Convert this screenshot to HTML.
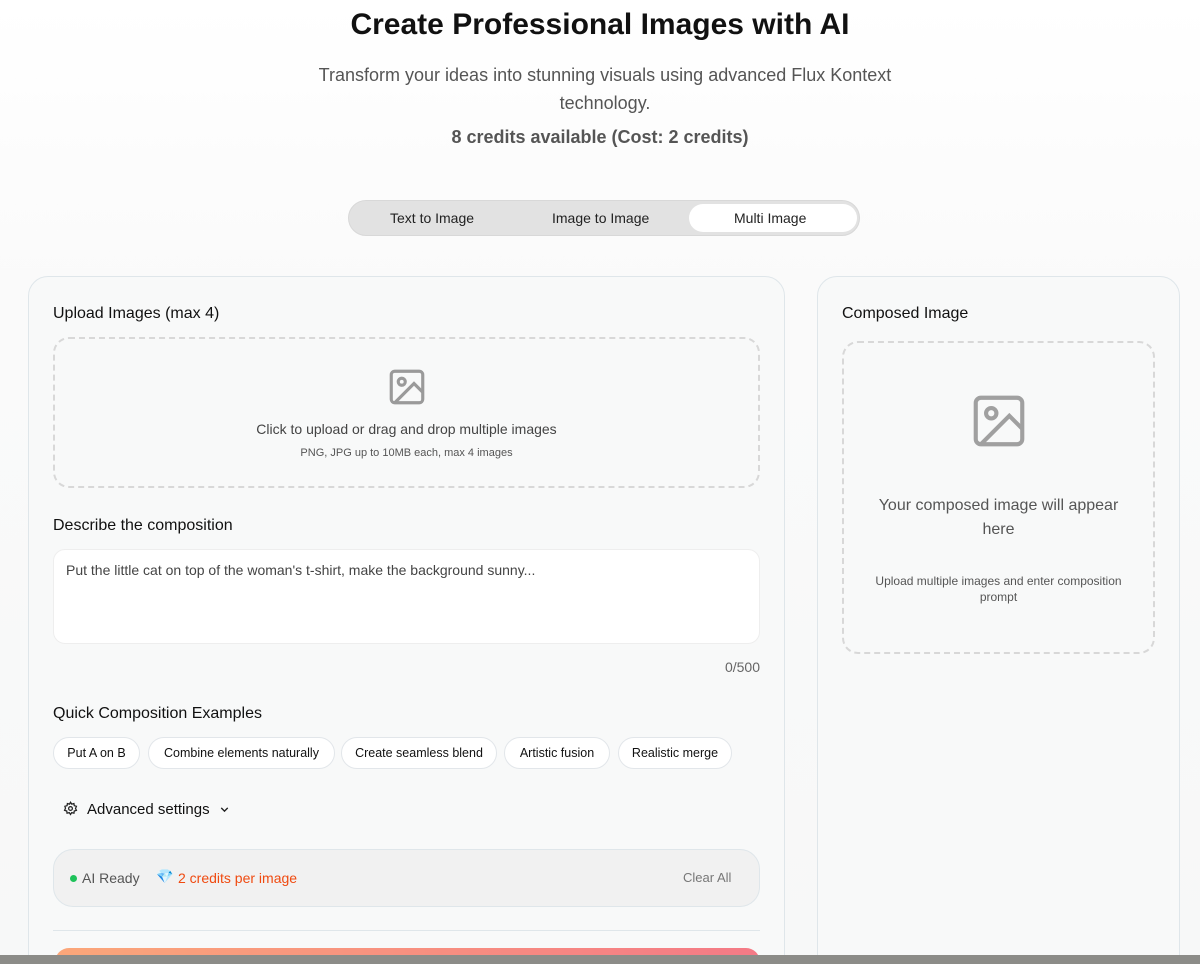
<!DOCTYPE html>
<html style="width:1200px;height:964px;overflow:hidden"><head><meta charset="utf-8"><style>
*{box-sizing:border-box;margin:0;padding:0}
body{width:1200px;height:964px;overflow:hidden;background:linear-gradient(#fff 0,#fafafa 300px,#f7f8f8 964px);font-family:"Liberation Sans",sans-serif;color:#111;position:relative}
h1{position:absolute;top:8px;width:100%;text-align:center;font-size:30px;font-weight:700;color:#111}
.sub{position:absolute;top:61px;left:290px;width:630px;text-align:center;font-size:18px;line-height:28px;color:#555}
.cred{position:absolute;top:127px;width:100%;text-align:center;font-size:18px;font-weight:700;color:#555}
.tabs{position:absolute;left:348px;top:200px;width:512px;height:36px;border-radius:18px;background:#e2e2e2;border:1px solid #d8d8d8}
.tabs span{position:absolute;top:9px;font-size:14px;color:#222}
.tabs .on{position:absolute;left:340px;top:3px;width:168px;height:28px;border-radius:14px;background:#fff}
.card{position:absolute;background:#f8f9f9;border:1px solid #dfe6ea;border-radius:20px}
.lbl{position:absolute;font-size:16px;color:#111}
.dash{position:absolute;border:2px dashed #d8d8d8;border-radius:16px}
.chip{position:absolute;top:737px;height:32px;border:1px solid #e2e6ea;border-radius:16px;background:#fff;font-size:12.5px;line-height:30px;text-align:center;color:#111;white-space:nowrap}
</style></head><body>
<h1>Create Professional Images with AI</h1>
<div class="sub">Transform your ideas into stunning visuals using advanced Flux Kontext technology.</div>
<div class="cred">8 credits available (Cost: 2 credits)</div>
<div class="tabs"><div class="on"></div><span style="left:41px">Text to Image</span><span style="left:203px">Image to Image</span><span style="left:385px">Multi Image</span></div>

<div class="card" style="left:28px;top:276px;width:757px;height:700px"></div>
<div class="lbl" style="left:53px;top:305px">Upload Images (max 4)</div>
<div class="dash" style="left:53px;top:337px;width:707px;height:151px"></div>
<svg style="position:absolute;left:386px;top:366px" width="42" height="42" viewBox="0 0 24 24" fill="none" stroke="#9a9a9a" stroke-width="1.8"><rect x="3" y="3" width="18" height="18" rx="2"/><circle cx="9" cy="9" r="2"/><path d="M21 15l-5-5L5 21"/></svg>
<div style="position:absolute;left:53px;width:707px;top:421px;text-align:center;font-size:14px;color:#444">Click to upload or drag and drop multiple images</div>
<div style="position:absolute;left:53px;width:707px;top:447px;text-align:center;font-size:11px;color:#555">PNG, JPG up to 10MB each, max 4 images</div>
<div class="lbl" style="left:53px;top:517px">Describe the composition</div>
<div style="position:absolute;left:53px;top:549px;width:707px;height:95px;background:#fff;border-radius:12px;border:1px solid #eee;padding:12px;font-size:14px;color:#444">Put the little cat on top of the woman's t-shirt, make the background sunny...</div>
<div style="position:absolute;left:700px;top:659px;width:60px;text-align:right;font-size:14px;color:#666">0/500</div>
<div class="lbl" style="left:53px;top:705px">Quick Composition Examples</div>
<div class="chip" style="left:53px;width:87px">Put A on B</div>
<div class="chip" style="left:148px;width:187px">Combine elements naturally</div>
<div class="chip" style="left:341px;width:156px">Create seamless blend</div>
<div class="chip" style="left:504px;width:106px">Artistic fusion</div>
<div class="chip" style="left:618px;width:114px">Realistic merge</div>
<svg style="position:absolute;left:63px;top:801px" width="15" height="15" viewBox="0 0 24 24" fill="none" stroke="#222" stroke-width="2"><circle cx="12" cy="12" r="3"/><path d="M12 2l2 3 3.5-1 .5 3.5 3.5 1-1.5 3.5 1.5 3-3.5 1-.5 3.5-3.5-1-2 3-2-3-3.5 1-.5-3.5-3.5-1 1.5-3.5L3 8.5l3.5-1L7 4l3.5 1z"/></svg>
<div style="position:absolute;left:87px;top:801px;font-size:15px;color:#111">Advanced settings</div>
<svg style="position:absolute;left:218px;top:803px" width="13" height="13" viewBox="0 0 24 24" fill="none" stroke="#222" stroke-width="2.5"><path d="M6 9l6 6 6-6"/></svg>
<div style="position:absolute;left:53px;top:849px;width:707px;height:58px;border-radius:20px;background:#f1f1f1;border:1px solid #dfe6ea"></div>
<div style="position:absolute;left:70px;top:875px;width:7px;height:7px;border-radius:50%;background:#1ec25a"></div>
<div style="position:absolute;left:82px;top:870px;font-size:14px;color:#555">AI Ready</div>
<div style="position:absolute;left:156px;top:868px;font-size:14px;color:#2a9ee8">💎</div>
<div style="position:absolute;left:178px;top:870px;font-size:14px;color:#f04a10">2 credits per image</div>
<div style="position:absolute;left:683px;top:870px;font-size:13px;color:#777">Clear All</div>
<div style="position:absolute;left:53px;top:930px;width:707px;height:1px;background:#dfe6ea"></div>
<div style="position:absolute;left:55px;top:948px;width:705px;height:16px;border-radius:14px 14px 0 0;background:linear-gradient(90deg,#fba77a,#f47a86)"></div>

<div class="card" style="left:817px;top:276px;width:363px;height:700px"></div>
<div class="lbl" style="left:842px;top:305px">Composed Image</div>
<div class="dash" style="left:842px;top:341px;width:313px;height:313px"></div>
<svg style="position:absolute;left:968px;top:390px" width="62" height="62" viewBox="0 0 24 24" fill="none" stroke="#a0a0a0" stroke-width="1.6"><rect x="3" y="3" width="18" height="18" rx="2"/><circle cx="9" cy="9" r="2"/><path d="M21 15l-5-5L5 21"/></svg>
<div style="position:absolute;left:862px;width:273px;top:494px;text-align:center;font-size:16px;line-height:24px;color:#555">Your composed image will appear here</div>
<div style="position:absolute;left:862px;width:273px;top:573px;text-align:center;font-size:12px;line-height:16px;color:#555">Upload multiple images and enter composition prompt</div>

<div style="position:absolute;left:0;top:955px;width:1200px;height:9px;background:#8c8c88"></div>
</body></html>
